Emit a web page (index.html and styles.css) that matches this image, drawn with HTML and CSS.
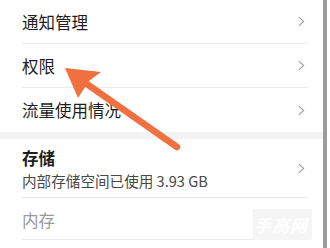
FILE: index.html
```html
<!DOCTYPE html>
<html>
<head>
<meta charset="utf-8">
<link rel="stylesheet" href="styles.css">
</head>
<body>
<div class="screen">
  <div class="main">
    <div class="row"><span class="title">通知管理</span><svg class="chev" viewBox="0 0 8 12"><path d="M1 1 L6.5 6 L1 11"/></svg></div>
    <div class="row"><span class="title">权限</span><svg class="chev" viewBox="0 0 8 12"><path d="M1 1 L6.5 6 L1 11"/></svg></div>
    <div class="row last"><span class="title">流量使用情况</span><svg class="chev" viewBox="0 0 8 12"><path d="M1 1 L6.5 6 L1 11"/></svg></div>
    <div class="band"></div>
    <div class="row tall">
      <div class="stack">
        <span class="title strong">存储</span>
        <span class="sub">内部存储空间已使用 3.93 GB</span>
      </div>
      <svg class="chev" viewBox="0 0 8 12"><path d="M1 1 L6.5 6 L1 11"/></svg>
    </div>
    <div class="row dim"><span class="title muted">内存</span><div class="mark">手高网</div></div>
  </div>
  <div class="bar"></div>
  <svg class="arrow" viewBox="0 0 330 248" width="330" height="248">
    <line x1="84" y1="82" x2="177" y2="147" stroke="#f0703f" stroke-width="6.5" stroke-linecap="round"/>
    <polygon points="65,68 101,72 89,81 78,98" fill="#f0703f"/>
  </svg>
</div>
</body>
</html>
```

FILE: styles.css
```css
html, body {
  margin: 0;
  padding: 0;
  background: #fff;
}
.screen {
  position: relative;
  width: 330px;
  height: 248px;
  overflow: hidden;
  display: flex;
  font-family: "Noto Sans CJK SC", "Noto Sans", sans-serif;
}
.main {
  width: 323px;
  display: flex;
  flex-direction: column;
}
.bar {
  width: 4px;
  background: #9c9c9c;
}
.row {
  margin-left: 22px;
  margin-right: 15px;
  height: 43px;
  border-bottom: 1px solid #ebebeb;
  display: flex;
  align-items: center;
  justify-content: space-between;
  position: relative;
}
.row.last {
  border-bottom: none;
  height: 44px;
}
.row.tall {
  height: 58px;
}
.row.dim {
  height: 42px;
  padding-top: 2px;
  box-sizing: border-box;
}
.band {
  height: 7px;
  background: #f3f3f3;
}
.title {
  font-size: 16.5px;
  color: #1e1e1e;
  line-height: 22px;
}
.strong {
  font-weight: 600;
}
.muted {
  color: #9a9a9a;
}
.stack {
  display: flex;
  flex-direction: column;
  gap: 2px;
  padding-top: 2px;
}
.sub {
  font-size: 14.6px;
  line-height: 20px;
  color: #474747;
}
.chev {
  width: 7px;
  height: 11px;
  margin-right: 3px;
  fill: none;
  stroke: #999;
  stroke-width: 1.2;
}
.mark {
  position: absolute;
  right: -4px;
  top: 11px;
  width: 59px;
  height: 31px;
  background: #f5f5f5;
  color: #fff;
  font-size: 17px;
  font-weight: bold;
  font-style: italic;
  display: flex;
  align-items: center;
  justify-content: flex-end;
  padding-right: 4px;
  box-sizing: border-box;
  letter-spacing: 1px;
}
.arrow {
  position: absolute;
  left: 0;
  top: 0;
  pointer-events: none;
}
```
